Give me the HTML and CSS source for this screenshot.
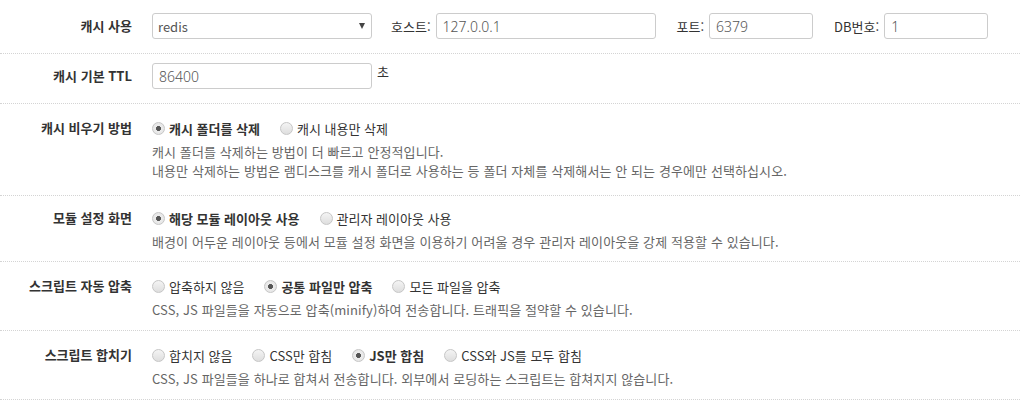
FILE: index.html
```html
<!DOCTYPE html>
<html lang="ko">
<head>
<meta charset="utf-8">
<title>캐시 설정</title>
<link rel="stylesheet" href="styles.css">
</head>
<body>
<div class="form">
  <div class="row row-input">
    <div class="label">캐시 사용</div>
    <div class="controls inline">
      <div class="select select-wide"><span>redis</span><i class="caret"></i></div>
      <span class="field-label first">호스트:</span>
      <span class="input input-host">127.0.0.1</span>
      <span class="field-label">포트:</span>
      <span class="input input-small">6379</span>
      <span class="field-label">DB번호:</span>
      <span class="input input-small">1</span>
    </div>
  </div>
  <div class="row row-input">
    <div class="label">캐시 기본 TTL</div>
    <div class="controls inline top">
      <span class="input input-wide">86400</span>
      <span class="unit">초</span>
    </div>
  </div>
  <div class="row row-tall">
    <div class="label lab-radio">캐시 비우기 방법</div>
    <div class="controls">
      <div class="options">
        <label class="opt checked"><input type="radio" name="r1" checked><span>캐시 폴더를 삭제</span></label>
        <label class="opt"><input type="radio" name="r1"><span>캐시 내용만 삭제</span></label>
      </div>
      <p class="desc">캐시 폴더를 삭제하는 방법이 더 빠르고 안정적입니다.<br>내용만 삭제하는 방법은 램디스크를 캐시 폴더로 사용하는 등 폴더 자체를 삭제해서는 안 되는 경우에만 선택하십시오.</p>
    </div>
  </div>
  <div class="row row-short">
    <div class="label lab-radio">모듈 설정 화면</div>
    <div class="controls">
      <div class="options">
        <label class="opt checked"><input type="radio" name="r2" checked><span>해당 모듈 레이아웃 사용</span></label>
        <label class="opt"><input type="radio" name="r2"><span>관리자 레이아웃 사용</span></label>
      </div>
      <p class="desc">배경이 어두운 레이아웃 등에서 모듈 설정 화면을 이용하기 어려울 경우 관리자 레이아웃을 강제 적용할 수 있습니다.</p>
    </div>
  </div>
  <div class="row">
    <div class="label lab-radio">스크립트 자동 압축</div>
    <div class="controls">
      <div class="options">
        <label class="opt"><input type="radio" name="r3"><span>압축하지 않음</span></label>
        <label class="opt checked"><input type="radio" name="r3" checked><span>공통 파일만 압축</span></label>
        <label class="opt"><input type="radio" name="r3"><span>모든 파일을 압축</span></label>
      </div>
      <p class="desc">CSS, JS 파일들을 자동으로 압축(minify)하여 전송합니다. 트래픽을 절약할 수 있습니다.</p>
    </div>
  </div>
  <div class="row">
    <div class="label lab-radio">스크립트 합치기</div>
    <div class="controls">
      <div class="options">
        <label class="opt"><input type="radio" name="r4"><span>합치지 않음</span></label>
        <label class="opt"><input type="radio" name="r4"><span>CSS만 합침</span></label>
        <label class="opt checked"><input type="radio" name="r4" checked><span>JS만 합침</span></label>
        <label class="opt"><input type="radio" name="r4"><span>CSS와 JS를 모두 합침</span></label>
      </div>
      <p class="desc">CSS, JS 파일들을 하나로 합쳐서 전송합니다. 외부에서 로딩하는 스크립트는 합쳐지지 않습니다.</p>
    </div>
  </div>
</div>
</body>
</html>
```

FILE: styles.css
```css
html, body {
  margin: 0;
  padding: 0;
  background: #fff;
}
body {
  font-family: "Noto Sans CJK KR", "Noto Sans", sans-serif;
  font-size: 13px;
  color: #333;
}
.form {
  padding-top: 3px;
}
.row {
  display: flex;
  align-items: flex-start;
  border-bottom: 1px dotted #d4d4d4;
  padding: 13px 0 11px;
}
.row-input {
  padding: 10px 0 14px;
}
.row-input + .row-input {
  padding-top: 9px;
}
.row-tall {
  padding-bottom: 15px;
}
.row-short {
  padding-top: 11px;
  padding-bottom: 10px;
}
.label {
  width: 132px;
  flex: none;
  text-align: right;
  font-weight: bold;
  color: #333;
  line-height: 26px;
  margin-right: 20px;
}
.lab-radio {
  line-height: 22px;
}
.controls {
  flex: 1;
}
.inline {
  display: flex;
  align-items: center;
}
.inline.top {
  align-items: flex-start;
}
.select, .input {
  box-sizing: border-box;
  height: 26px;
  border: 1px solid #ccc;
  border-radius: 3px;
  background: #fff;
  display: flex;
  align-items: center;
  padding: 0 6px;
  color: #555;
}
.select {
  width: 220px;
  justify-content: space-between;
  font-size: 13px;
  padding-left: 5px;
  padding-right: 6px;
}
.caret {
  width: 0;
  height: 0;
  border-left: 3.5px solid transparent;
  border-right: 3.5px solid transparent;
  border-top: 6px solid #444;
}
.input {
  font-size: 14px;
  font-family: "Noto Sans", "Noto Sans CJK KR", sans-serif;
  font-weight: 300;
  color: #555;
}
.input-host { width: 220px; }
.input-small { width: 104px; }
.input-wide { width: 220px; padding-left: 6px; }
.field-label {
  margin: 0 5px 0 21px;
  color: #333;
}
.field-label.first {
  margin-left: 19px;
}
.unit {
  margin-left: 5px;
  line-height: 18px;
  color: #333;
}
.options {
  display: flex;
  gap: 20px;
  height: 22px;
  align-items: center;
}
.opt {
  display: flex;
  align-items: center;
  color: #333;
  white-space: nowrap;
}
.opt.checked {
  font-weight: bold;
}
.opt input {
  -webkit-appearance: none;
  appearance: none;
  box-sizing: border-box;
  width: 13px;
  height: 13px;
  margin: 0 4px 0 0;
  border: 1px solid #c6c6c6;
  border-radius: 50%;
  background: linear-gradient(#f4f4f4, #dedede);
}
.opt input:checked {
  background: radial-gradient(circle, #555 0, #555 2.2px, #ececec 2.8px, #e2e2e2 100%);
}
.desc {
  margin: 3px 0 0;
  line-height: 19px;
  color: #666;
  letter-spacing: 0.1px;
  white-space: nowrap;
}
```
